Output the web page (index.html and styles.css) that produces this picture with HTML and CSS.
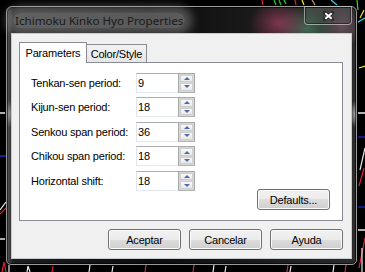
FILE: index.html
```html
<!DOCTYPE html>
<html lang="en">
<head>
    <meta charset="UTF-8">
    <title>Ichimoku Kinko Hyo Properties</title>
    <link rel="stylesheet" href="styles.css">
</head>
<body>

<svg class="chart" width="365" height="272" viewBox="0 0 365 272">
    <g fill="none" stroke-width="1.2">
        <path d="M262 0 L263 5" stroke="#e0203a"/>
        <path d="M274 0 L276 5 M279 0 L281 5 M284 0 L286 4" stroke="#22d030"/>
        <path d="M295 0 L296 5" stroke="#e0203a"/>
        <path d="M302 0 L304 5" stroke="#f2f020"/>
        <path d="M312 0 L315 5" stroke="#c8a070"/>
        <path d="M331 0 L337 5" stroke="#30d8e8"/>
        <path d="M357 0 L358 10" stroke="#30e030"/>
        <path d="M364 10 L360 18" stroke="#f0e020"/>
        <path d="M365 18 L358 22" stroke="#30d8e8"/>
        <path d="M359 68 L365 66" stroke="#f0f020"/>
        <path d="M358 113 L365 113" stroke="#b0b0b0" stroke-width="2"/>
        <path d="M358 137 L365 137 M358 207 L365 207" stroke="#2030ff"/>
        <path d="M365 148 L360 170" stroke="#e8e8e8"/>
        <path d="M364 168 L359 186" stroke="#e0203a"/>
        <path d="M358 230 L365 230" stroke="#b0b0b0" stroke-width="2"/>
        <path d="M365 238 L359 268" stroke="#e0203a"/>
        <path d="M362 248 L362 272" stroke="#e8e8e8"/>
        <path d="M0 113 L5 113 M0 239 L5 239" stroke="#b0b0b0" stroke-width="2"/>
        <path d="M0 156 L6 156" stroke="#2030ff"/>
        <path d="M0 210 L6 202" stroke="#e8e8e8"/>
        <path d="M0 214 L6 208" stroke="#e0203a"/>
        <path d="M2 272 L4 262 L6 272 M52 272 L53 266 M145 272 L146 265 M193 272 L194 265 M287 272 L288 265 M345 272 L346 265" stroke="#e0203a"/>
        <path d="M9 272 L9 265 M27 272 L28 266 L30 272 M89 272 L90 265 M112 272 L113 266 M213 272 L214 265 M225 272 L226 266 M290 272 L291 266 M333 272 L334 265" stroke="#e8e8e8"/>
    </g>
</svg>

<div class="window">
    <div class="titlebar">
        <span class="title">Ichimoku Kinko Hyo Properties</span>
        <button class="close">
            <svg width="11" height="10" viewBox="0 0 11 10">
                <path d="M2 2 L9 8 M9 2 L2 8" stroke="#2a2a2a" stroke-width="4" stroke-linecap="round"/>
                <path d="M2.3 2.3 L8.7 7.7 M8.7 2.3 L2.3 7.7" stroke="#fff" stroke-width="2"/>
            </svg>
        </button>
    </div>

    <div class="client">
        <div class="tabs">
            <div class="tab active">Parameters</div>
            <div class="tab">Color/Style</div>
        </div>

        <div class="panel">
            <div class="row">
                <label for="tenkan">Tenkan-sen period:</label>
                <div class="spin-field">
                    <input type="text" id="tenkan" value="9">
                    <div class="spinner"><span class="up"></span><span class="down"></span></div>
                </div>
            </div>
            <div class="row">
                <label for="kijun">Kijun-sen period:</label>
                <div class="spin-field">
                    <input type="text" id="kijun" value="18">
                    <div class="spinner"><span class="up"></span><span class="down"></span></div>
                </div>
            </div>
            <div class="row">
                <label for="senkou">Senkou span period:</label>
                <div class="spin-field">
                    <input type="text" id="senkou" value="36">
                    <div class="spinner"><span class="up"></span><span class="down"></span></div>
                </div>
            </div>
            <div class="row">
                <label for="chikou">Chikou span period:</label>
                <div class="spin-field">
                    <input type="text" id="chikou" value="18">
                    <div class="spinner"><span class="up"></span><span class="down"></span></div>
                </div>
            </div>
            <div class="row">
                <label for="shift">Horizontal shift:</label>
                <div class="spin-field">
                    <input type="text" id="shift" value="18">
                    <div class="spinner"><span class="up"></span><span class="down"></span></div>
                </div>
            </div>
            <div class="panel-actions">
                <button class="btn">Defaults...</button>
            </div>
        </div>

        <div class="actions">
            <button class="btn">Aceptar</button>
            <button class="btn">Cancelar</button>
            <button class="btn">Ayuda</button>
        </div>
    </div>
</div>

</body>
</html>
```

FILE: styles.css
```css
body {
    margin: 0;
    width: 365px;
    height: 272px;
    overflow: hidden;
    position: relative;
    background: #000;
    font-family: "Liberation Sans", Arial, sans-serif;
    font-size: 11px;
    letter-spacing: -0.2px;
    color: #000;
}
.chart {
    position: absolute;
    left: 0;
    top: 0;
}
.window {
    position: relative;
    margin: 6px 0 0 6px;
    width: 351px;
    height: 259px;
    box-sizing: border-box;
    display: flex;
    flex-direction: column;
    padding: 0 4px 5px 4px;
    border: 1px solid #9a9a9a;
    border-radius: 6px 6px 5px 5px;
    box-shadow: inset 0 0 0 1px rgba(0, 0, 0, 0.6);
    background:
        radial-gradient(ellipse 30px 22px at 272px 16px, rgba(190, 70, 110, 0.6), transparent),
        radial-gradient(ellipse 30px 24px at 300px 22px, rgba(90, 170, 120, 0.5), transparent),
        radial-gradient(ellipse 22px 20px at 335px 20px, rgba(150, 110, 130, 0.55), transparent),
        radial-gradient(ellipse 6px 14px at 349px 107px, rgba(220, 220, 220, 0.8), transparent),
        radial-gradient(ellipse 6px 14px at 2px 107px, rgba(200, 200, 200, 0.6), transparent),
        linear-gradient(to right, #5a5a5a 0, #1e1e1e 6px, #0c0c0c 40%, #1c1c1c 75%, #2c2c2c 100%);
}
.titlebar {
    height: 26px;
    display: flex;
    align-items: flex-start;
}
.title {
    margin: 6px 0 0 2px;
    padding: 0 2px;
    font-family: "Noto Sans", "Liberation Sans", sans-serif;
    font-size: 11.6px;
    letter-spacing: 0;
    line-height: 15px;
    color: #1a1a1a;
    background: rgba(165, 165, 165, 0.5);
    border-radius: 9px;
    box-shadow: 0 0 10px 7px rgba(165, 165, 165, 0.45);
}
.close {
    margin: -1px 0 0 auto;
    width: 48px;
    height: 19px;
    padding: 0;
    display: flex;
    align-items: center;
    justify-content: center;
    border: 1px solid rgba(210, 210, 210, 0.6);
    border-radius: 0 0 4px 4px;
    box-shadow: inset 0 0 0 1px rgba(0, 0, 0, 0.45);
    background: linear-gradient(rgba(255, 255, 255, 0.14), rgba(255, 255, 255, 0.04));
}
.client {
    flex: 1;
    display: flex;
    flex-direction: column;
    padding: 8px 8px 0 7px;
    border: 1px solid #c6ccd4;
    background: #f0f0f0;
}
.tabs {
    height: 20px;
    display: flex;
    align-items: flex-end;
}
.tab {
    height: 18px;
    box-sizing: border-box;
    display: flex;
    align-items: center;
    justify-content: center;
    border: 1px solid #898c95;
    border-bottom: none;
    background: linear-gradient(#f2f2f2, #e6e6e6);
}
.tab.active {
    position: relative;
    z-index: 1;
    width: 68px;
    height: 21px;
    margin-bottom: -1px;
    padding-bottom: 1px;
    background: #fff;
}
.tab + .tab {
    width: 61px;
    margin-left: -1px;
    padding-top: 1px;
}
.panel {
    height: 159px;
    box-sizing: border-box;
    display: flex;
    flex-direction: column;
    gap: 4.6px;
    padding: 9.5px 12px 0 11px;
    border: 1px solid #898c95;
    background: #fff;
}
.row {
    height: 20px;
    display: flex;
    align-items: center;
}
.row label {
    width: 105px;
}
.spin-field {
    width: 59px;
    height: 20px;
    box-sizing: border-box;
    display: flex;
    border: 1px solid;
    border-color: #abadb3 #dbdfe6 #e3e9ef #e2e3ea;
    background: #fff;
}
.spin-field input {
    flex: 1;
    min-width: 0;
    height: 18px;
    border: 0;
    padding: 0 0 0 1px;
    outline: none;
    font: inherit;
    letter-spacing: inherit;
    color: #000;
    background: transparent;
}
.spinner {
    width: 17px;
    box-sizing: border-box;
    display: flex;
    flex-direction: column;
    gap: 1px;
    padding: 1px;
    border: 1px solid #a9a9a9;
    border-bottom-color: #b4b4b4;
    margin: -1px -1px -1px 0;
    background: #d6d6d6;
}
.spinner span {
    flex: 1;
    display: flex;
    align-items: center;
    justify-content: center;
    border: 1px solid #cfcfcf;
    background: linear-gradient(#f9f9f9, #e9e9e9);
}
.spinner span::after {
    content: "";
    border-left: 3px solid transparent;
    border-right: 3px solid transparent;
}
.spinner .up::after {
    border-bottom: 3px solid #4f69ad;
}
.spinner .down::after {
    border-top: 3px solid #4f69ad;
}
.panel-actions {
    display: flex;
    justify-content: flex-end;
    margin-top: -6px;
}
.actions {
    display: flex;
    justify-content: flex-end;
    gap: 8px;
    margin-top: 8px;
}
.btn {
    width: 73px;
    height: 21px;
    padding: 0;
    box-sizing: border-box;
    border: 1px solid #707070;
    border-radius: 3px;
    box-shadow: inset 0 0 0 1px #fbfbfb;
    background: linear-gradient(#f2f2f2 0, #ebebeb 50%, #dddddd 50%, #cfcfcf 100%);
    font: inherit;
    letter-spacing: inherit;
    color: #000;
}
```
